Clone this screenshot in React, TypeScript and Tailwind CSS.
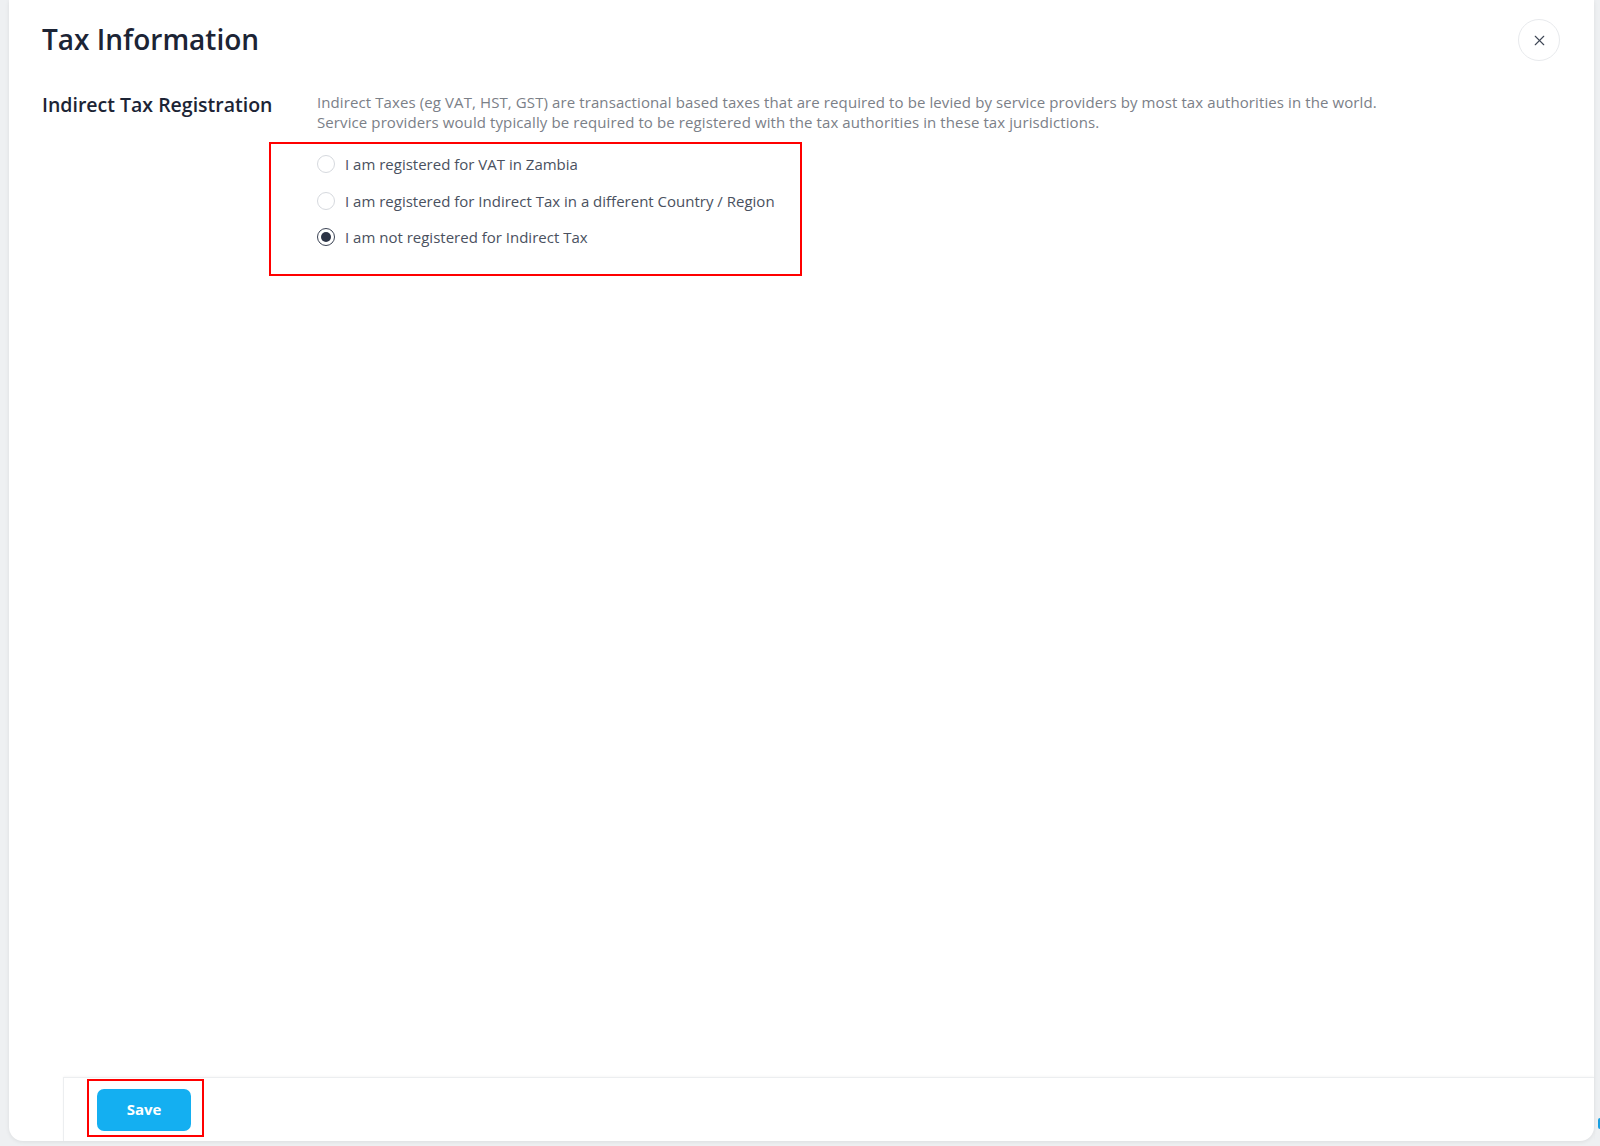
import React, { useState } from 'react';
import { X } from 'lucide-react';

const OPTIONS = [
  { id: 'zambia', label: 'I am registered for VAT in Zambia' },
  { id: 'other', label: 'I am registered for Indirect Tax in a different Country / Region' },
  { id: 'none', label: 'I am not registered for Indirect Tax' },
];

const Radio: React.FC<{ checked: boolean }> = ({ checked }) =>
  checked ? (
    <span className="flex h-[18px] w-[18px] items-center justify-center rounded-full border-[1.5px] border-[#3a4253] bg-white">
      <span className="h-[10px] w-[10px] rounded-full bg-[#2b3345]" />
    </span>
  ) : (
    <span className="h-[18px] w-[18px] rounded-full border border-[#d6d9de] bg-white" />
  );

const App: React.FC = () => {
  const [selected, setSelected] = useState<string>('none');

  return (
    <div
      className="min-h-screen bg-[#eef0f2] pl-[9px] pr-[6px]"
      style={{ fontFamily: '"Open Sans", Lato, sans-serif' }}
    >
      <div className="relative flex h-[1141px] flex-col rounded-b-[14px] bg-white shadow-[0_1px_4px_rgba(0,0,0,0.08)]">
        <header className="flex items-start justify-between pl-[33px] pr-[34px] pt-[19px]">
          <h1 className="mt-[1px] text-[28px] font-semibold leading-[38px] text-[#1c2435]">Tax Information</h1>
          <button className="flex h-[42px] w-[42px] items-center justify-center rounded-full border border-[#e8eaed] text-[#3f4756]">
            <X size={17} strokeWidth={1.6} />
          </button>
        </header>

        <section className="flex pl-[33px] pt-[31px]">
          <h2 className="w-[275px] shrink-0 text-[19.5px] font-semibold leading-[26px] text-[#1c2435]">
            Indirect Tax Registration
          </h2>
          <div>
            <div className="text-[15px] leading-[20px] tracking-[0.1px] text-[#7b8088]">
              <p>Indirect Taxes (eg VAT, HST, GST) are transactional based taxes that are required to be levied by service providers by most tax authorities in the world.</p>
              <p>Service providers would typically be required to be registered with the tax authorities in these tax jurisdictions.</p>
            </div>
            <div className="relative mt-[14px]">
              <div className="pointer-events-none absolute -left-[48px] -top-[4px] h-[134px] w-[533px] border-2 border-[#ff0000]" />
              {OPTIONS.map((o) => (
                <label
                  key={o.id}
                  onClick={() => setSelected(o.id)}
                  className="flex h-[36.5px] cursor-pointer items-center gap-[10px] text-[15px] text-[#4a5160]"
                >
                  <Radio checked={selected === o.id} />
                  <span>{o.label}</span>
                </label>
              ))}
            </div>
          </div>
        </section>

        <footer className="ml-[54px] mt-auto flex h-[64px] items-center border-l border-t border-[#eceef0] pl-[33px] shadow-[0_-1px_2px_rgba(0,0,0,0.03)]">
          <div className="relative">
            <div className="pointer-events-none absolute -left-[10px] -top-[10px] h-[58px] w-[117px] border-2 border-[#ff0000]" />
            <button className="h-[42px] w-[94px] rounded-[7px] bg-[#14aff1] text-[15px] font-bold text-white">
              Save
            </button>
          </div>
        </footer>

        <div className="absolute -right-[6px] top-[1118px] h-[11px] w-[2px] rounded-l bg-[#1a9fe0]" />
      </div>
    </div>
  );
};

export default App;
